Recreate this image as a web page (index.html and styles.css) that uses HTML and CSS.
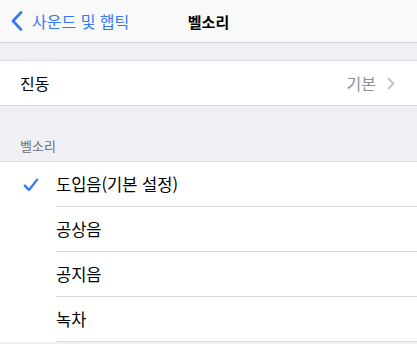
FILE: index.html
```html
<!DOCTYPE html>
<html lang="ko">
<head>
<meta charset="utf-8">
<link rel="stylesheet" href="styles.css">
</head>
<body>
<header class="nav">
  <div class="back">
    <svg class="back-chevron" width="12" height="20" viewBox="0 0 12 20"><path d="M10 1.5 L2 10 L10 18.5" fill="none" stroke="#3478f6" stroke-width="2.6" stroke-linecap="round" stroke-linejoin="round"/></svg>
    <span>사운드 및 햅틱</span>
  </div>
  <div class="title">벨소리</div>
  <div></div>
</header>

<section class="group first">
  <div class="cell">
    <span class="label">진동</span>
    <span class="detail">기본</span>
    <svg class="chev" width="8" height="13" viewBox="0 0 8 13"><path d="M1.5 1.5 L6.5 6.5 L1.5 11.5" fill="none" stroke="#c4c4c8" stroke-width="1.8" stroke-linecap="round" stroke-linejoin="round"/></svg>
  </div>
</section>

<div class="section-header">벨소리</div>

<section class="group list">
  <div class="item">
    <div class="mark">
      <svg width="16" height="14" viewBox="0 0 16 14"><path d="M1.8 7.6 L6 12 L14.2 1.6" fill="none" stroke="#3478f6" stroke-width="2.3" stroke-linecap="round" stroke-linejoin="round"/></svg>
    </div>
    <div class="item-text">도입음(기본 설정)</div>
  </div>
  <div class="item">
    <div class="mark"></div>
    <div class="item-text">공상음</div>
  </div>
  <div class="item">
    <div class="mark"></div>
    <div class="item-text">공지음</div>
  </div>
  <div class="item">
    <div class="mark"></div>
    <div class="item-text">녹차</div>
  </div>
</section>
</body>
</html>
```

FILE: styles.css
```css
html, body {
  margin: 0;
  padding: 0;
}
body {
  width: 417px;
  height: 344px;
  overflow: hidden;
  background: #efeff4;
  font-family: "Noto Sans CJK KR", "Noto Sans", sans-serif;
  color: #000;
}
.nav {
  box-sizing: border-box;
  height: 43px;
  background: #f9f9f9;
  border-bottom: 1px solid #d6d6d8;
  display: grid;
  grid-template-columns: 1fr auto 1fr;
  align-items: center;
}
.back {
  display: flex;
  align-items: center;
  padding-left: 11px;
  color: #3478f6;
  font-size: 16px;
  gap: 9px;
}
.title {
  font-size: 15px;
  font-weight: 700;
}
.group {
  background: #fff;
  border-top: 1px solid #dcdce0;
  border-bottom: 1px solid #dcdce0;
}
.first {
  margin-top: 17px;
}
.cell {
  height: 44px;
  display: flex;
  align-items: center;
  padding: 0 22px 0 20px;
  font-size: 16px;
}
.label {
  flex: 1;
}
.detail {
  color: #8e8e93;
  margin-right: 11px;
}
.section-header {
  box-sizing: border-box;
  height: 55px;
  display: flex;
  align-items: flex-end;
  padding: 0 0 6px 20px;
  font-size: 13px;
  color: #6d6d72;
}
.list {
  border-bottom: none;
}
.item {
  display: grid;
  grid-template-columns: 56px 1fr;
  height: 45px;
}
.mark {
  display: flex;
  align-items: center;
  padding-left: 23px;
}
.item-text {
  display: flex;
  align-items: center;
  border-bottom: 1px solid #dcdce0;
  font-size: 16.5px;
}
```
